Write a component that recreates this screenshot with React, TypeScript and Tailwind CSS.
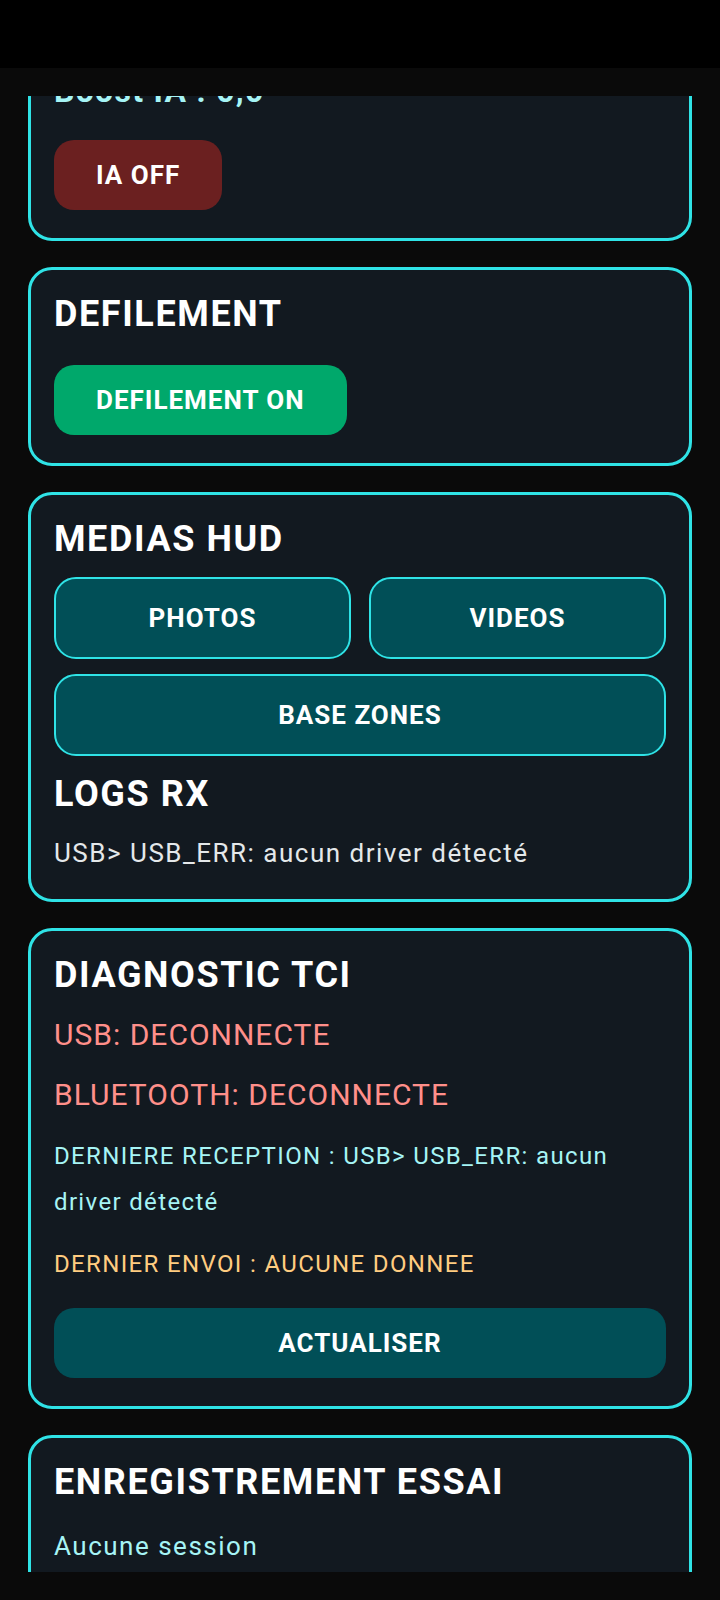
import React from "react";

function Card({ children, className = "" }: { children: React.ReactNode; className?: string }) {
  return (
    <div
      className={
        "rounded-[24px] border-[3px] border-[#2fe3e6] bg-[#121920] px-[23px] pt-[23px] pb-[23px] flex flex-col items-start " +
        className
      }
    >
      {children}
    </div>
  );
}

function Heading({ children, className = "" }: { children: React.ReactNode; className?: string }) {
  return (
    <div className={"text-[36px] leading-[42px] font-bold tracking-[1.6px] text-white whitespace-nowrap " + className}>
      {children}
    </div>
  );
}

const tealBtn =
  "h-[82px] rounded-[22px] border-2 border-[#2fe3e6] bg-[#014f57] text-white text-[26px] font-bold tracking-[1px]";

export default function App() {
  return (
    <div className="w-[720px] h-[1600px] bg-[#0a0a0a] flex flex-col overflow-hidden font-['Roboto','Noto_Sans',sans-serif]">
      <div className="h-[68px] bg-black shrink-0" />
      <div className="h-[28px] shrink-0" />
      <div className="h-[1476px] overflow-hidden shrink-0">
        <div className="px-[28px] -mt-[54px] flex flex-col gap-[26px]">
          {/* Card 1 */}
          <Card>
            <div className="mt-[2px] text-[32px] leading-[42px] font-bold tracking-[1.3px] text-[#a6f4f5] whitespace-nowrap">
              Boost IA : 0,0
            </div>
            <button className="mt-[28px] mb-[5px] h-[70px] px-[42px] rounded-[20px] bg-[#6b2020] text-white text-[26px] font-bold tracking-[1px]">
              IA OFF
            </button>
          </Card>

          {/* Card 2 */}
          <Card>
            <Heading>DEFILEMENT</Heading>
            <button className="mt-[30px] mb-[5px] h-[70px] px-[42px] rounded-[20px] bg-[#00a86b] text-white text-[26px] font-bold tracking-[1px]">
              DEFILEMENT ON
            </button>
          </Card>

          {/* Card 3 */}
          <Card>
            <Heading>MEDIAS HUD</Heading>
            <div className="mt-[17px] w-full grid grid-cols-2 gap-[18px]">
              <button className={tealBtn}>PHOTOS</button>
              <button className={tealBtn}>VIDEOS</button>
            </div>
            <button className={"mt-[15px] w-full " + tealBtn}>BASE ZONES</button>
            <Heading className="mt-[17px]">LOGS RX</Heading>
            <div className="mt-[15px] text-[26px] leading-[46px] tracking-[1.5px] text-[#e4e8ea]">
              USB&gt; USB_ERR: aucun driver détecté
            </div>
          </Card>

          {/* Card 4 */}
          <Card>
            <Heading>DIAGNOSTIC TCI</Heading>
            <div className="mt-[21px] text-[30px] leading-[36px] tracking-[1px] text-[#ff8f8a]">USB: DECONNECTE</div>
            <div className="mt-[24px] text-[30px] leading-[36px] tracking-[1px] text-[#ff8f8a]">
              BLUETOOTH: DECONNECTE
            </div>
            <div className="mt-[20px] text-[24px] leading-[46px] tracking-[1.35px] text-[#a6f4f5]">
              DERNIERE RECEPTION : USB&gt; USB_ERR: aucun driver détecté
            </div>
            <div className="mt-[16px] text-[24px] leading-[46px] tracking-[1.35px] text-[#ffcc80]">
              DERNIER ENVOI : AUCUNE DONNEE
            </div>
            <button className="mt-[21px] mb-[5px] w-full h-[70px] rounded-[20px] bg-[#014f57] text-white text-[26px] font-bold tracking-[1px]">
              ACTUALISER
            </button>
          </Card>

          {/* Card 5 */}
          <Card>
            <Heading>ENREGISTREMENT ESSAI</Heading>
            <div className="mt-[20px] text-[26px] leading-[46px] tracking-[1.5px] text-[#a6f4f5]">Aucune session</div>
            <div className="h-[200px]" />
          </Card>
        </div>
      </div>
    </div>
  );
}
